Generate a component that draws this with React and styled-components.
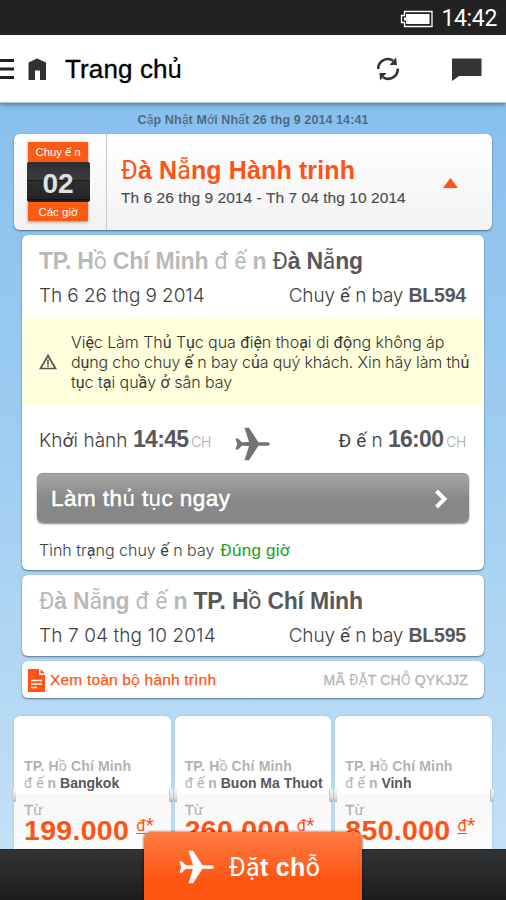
import React from "react";
import styled, { createGlobalStyle } from "styled-components";

const GlobalStyle = createGlobalStyle`
  * { box-sizing: border-box; }
  body { margin: 0; overflow: hidden; font-family: "Liberation Sans", Arial, sans-serif; }
`;

const LIGHT = `font-family: Inter, "Liberation Sans", sans-serif; font-weight: 300;`;

const Screen = styled.div`
  width: 506px;
  height: 900px;
  overflow: hidden;
  display: flex;
  flex-direction: column;
  background: #8abfed;
`;

const StatusBar = styled.div`
  flex: none;
  height: 35px;
  background: #222;
  color: #fff;
  display: flex;
  align-items: center;
  justify-content: flex-end;
  gap: 8px;
  padding: 2px 9px 0 0;
  font: 400 23px/34px Roboto, sans-serif;
  letter-spacing: -0.35px;
`;

const Header = styled.header`
  flex: none;
  height: 68px;
  background: #fff;
  display: flex;
  align-items: center;
  position: relative;
  border-bottom: 1px solid #b5c4d2;
  box-shadow: 0 1px 5px rgba(20, 50, 80, 0.6);
  svg { display: block; flex: none; }
`;

const HeaderTitle = styled.h1`
  margin: 0 0 0 19px;
  width: 311px;
  font-size: 26px;
  font-weight: 400;
  line-height: 34px;
  letter-spacing: 0.12px;
  color: #000;
  -webkit-text-stroke: 0.35px #000;
`;

const ChatSlot = styled.div`margin-left: 52px;`;

const Content = styled.main`
  flex: none;
  height: 746px;
  overflow: hidden;
  display: flex;
  flex-direction: column;
  align-items: center;
  background: linear-gradient(#89bfed, #9dccf1 45%, #c3e0f6);
`;

const Updated = styled.div`
  height: 30px;
  padding-top: 2px;
  font-size: 12.5px;
  line-height: 30px;
  font-weight: 700;
  letter-spacing: 0.09px;
  color: #4c6b87;
`;

const Fallback = styled.span`
  font-family: Roboto, sans-serif;
  font-weight: 400;
  line-height: 1;
  -webkit-text-stroke: 0;
`;

const EXTENDED = /([\u1EA0-\u1EF9đĐơƠưƯăĂ]+)/;

/* Extended Vietnamese letters are set in the system face. */
function Viet({ children }) {
  return children
    .split(EXTENDED)
    .map((part, i) => (i % 2 ? <Fallback key={i}>{part}</Fallback> : part));
}

const Panel = styled.section`
  flex: none;
  background: #fff;
  border-radius: 6px;
  box-shadow: 0 1px 2px rgba(40, 60, 80, 0.65);
`;

const Summary = styled(Panel)`
  width: 478px;
  height: 96px;
  margin-top: 1px;
  display: flex;
  background: linear-gradient(#fff, #f2f2f2);
`;

const CounterCell = styled.div`
  width: 93px;
  border-right: 1px solid #ccc;
  display: flex;
  flex-direction: column;
  align-items: center;
  padding: 8px 4px 0 0;
`;

const CounterLabel = styled.div`
  width: 60px;
  height: ${(p) => p.$h}px;
  background: #fc5b14;
  color: #fff;
  text-align: center;
  font-size: 11.5px;
  line-height: ${(p) => p.$h + 1}px;
  letter-spacing: ${(p) => p.$ls || 0}px;
  white-space: nowrap;
  box-shadow: 0 1px 3px rgba(0, 0, 0, 0.4);
`;

const CounterValue = styled.div`
  position: relative;
  width: 63px;
  height: 40px;
  border-radius: 2px;
  background: linear-gradient(#2d2f32, #3a3c40 44%, #17181a 46%, #2c2e31 48%, #25272a 86%, #0d0d0e 87%, #333 90%, #111 93%, #2c2c2c);
  color: #e0e0e0;
  text-align: center;
  font-size: 28px;
  font-weight: 700;
  line-height: 43px;
`;

const TripHeading = styled.div`
  flex: 1;
  padding: 21px 0 0 14px;
  white-space: nowrap;
`;

const TripTitle = styled.div`
  font-size: 25px;
  line-height: 31px;
  font-weight: 700;
  letter-spacing: 0.13px;
  color: #ff5313;
`;

const TripDates = styled.div`
  font-size: 15.5px;
  line-height: 24px;
  letter-spacing: 0.06px;
  color: #4d4d4f;
  -webkit-text-stroke: 0.15px #4d4d4f;
`;

const Triangle = styled.svg`
  display: block;
  margin: 44px 34px 0 0;
`;

const Leg = styled(Panel)`
  width: 462px;
  height: ${(p) => p.$h}px;
  margin-top: 5px;
  padding-top: 11px;
  white-space: nowrap;
  color: #404042;
`;

const Route = styled.div`
  padding-left: 17px;
  font-size: 23px;
  line-height: 30px;
  height: 30px;
  font-weight: 700;
  letter-spacing: -0.21px;
  color: #58585a;
`;

const Muted = styled.span`color: #b9b9b9;`;

const Split = styled.div`
  display: flex;
  align-items: center;
  padding: 0 18px 0 17px;
`;

const DateRow = styled(Split)`
  justify-content: space-between;
  height: 38px;
`;

const Piece = styled.span`
  ${LIGHT}
  font-size: 19px;
  letter-spacing: ${(p) => p.$ls || 0}px;
  b {
    font: 700 19.5px "Liberation Sans", sans-serif;
    letter-spacing: -0.2px;
    color: #58585a;
  }
`;

const Notice = styled.div`
  height: 88px;
  margin-top: 3px;
  padding: 2px 0 0 17px;
  background: #ffffdb;
  display: flex;
  align-items: center;
  gap: 14px;
  svg { flex: none; }
`;

const NoticeText = styled.div`
  ${LIGHT}
  font-size: 16px;
  line-height: 20.3px;
  color: #333;
`;

const NoticeLine = styled.div`
  height: 20.3px;
  letter-spacing: ${(p) => p.$ls}px;
`;

const TimeRow = styled(Split)`
  height: 68px;
  b { font-size: 23px; letter-spacing: -0.7px; }
  small { font-size: 14px; letter-spacing: -0.4px; color: #aaa; margin-left: 3px; }
`;

const PlaneSlot = styled.div`
  margin: 9px auto 0 24px;
  height: 34px;
`;

const CheckIn = styled.button`
  display: flex;
  align-items: center;
  justify-content: space-between;
  width: 432px;
  height: 50px;
  margin: 0 0 0 15px;
  padding: 2px 21px 0 14px;
  border: 0;
  border-radius: 6px;
  background: linear-gradient(#a6a6a6, #878787 55%, #888);
  box-shadow: 0 1px 2px rgba(0, 0, 0, 0.45), inset 0 1px 0 #939393;
  color: #fff;
  font: 400 22.5px/48px "Liberation Sans", sans-serif;
  letter-spacing: 0.43px;
  -webkit-text-stroke: 0.5px #fff;
`;

const FlightStatus = styled.div`
  ${LIGHT}
  display: flex;
  gap: 6px;
  padding: 2px 0 0 17px;
  font-size: 16px;
  line-height: 51px;
`;

const Good = styled.span`
  font-family: "Liberation Sans", sans-serif;
  font-weight: 400;
  font-size: 17px;
  color: #18a01c;
  letter-spacing: 0.25px;
`;

const BookingBar = styled(Panel)`
  width: 462px;
  height: 37px;
  margin-top: 5px;
  display: flex;
  align-items: center;
  padding: 1px 16px 0 6px;
  white-space: nowrap;
`;

const FullTrip = styled.span`
  margin: 0 auto 0 5px;
  font-size: 15.5px;
  color: #ff5313;
  letter-spacing: 0.18px;
  -webkit-text-stroke: 0.25px #ff5313;
`;

const Code = styled.span`
  font-size: 14px;
  color: #b5b5b5;
  letter-spacing: 0.18px;
  -webkit-text-stroke: 0.3px #b5b5b5;
`;

const Deals = styled.div`
  flex: none;
  display: flex;
  gap: 4px;
  width: 478px;
  margin-top: 18px;
`;

const DealCard = styled.div`
  position: relative;
  flex: 1 1 0;
  min-width: 0;
  height: 150px;
  border-radius: 6px;
  background: linear-gradient(#fff 77px, #f8f8f8 79px, #fcfcfc);
  box-shadow: 0 0 2px rgba(50, 80, 110, 0.25);
  padding: 42px 0 0 10px;
  white-space: nowrap;
  color: #b2b2b2;
  font-size: 14px;
  font-weight: 700;
  line-height: 17px;
  b { color: #58585a; }
`;

const Origin = styled.div`letter-spacing: 0.15px;`;

const Hinge = styled.i`
  position: absolute;
  top: 73px;
  ${(p) => p.$side}: -2px;
  width: 4px;
  height: 13px;
  border-left: 1px solid #c4c8cb;
  background: linear-gradient(#f4f4f4, #dedede 60%, #b8b8b8);
`;

const From = styled.div`
  margin-top: 9px;
  font-weight: 400;
  font-size: 15px;
  line-height: 17px;
  -webkit-text-stroke: 0.3px #b2b2b2;
`;

const Price = styled.div`
  display: flex;
  align-items: flex-start;
  gap: 7px;
  font-size: 28.5px;
  line-height: 24px;
  color: #ff5313;
  letter-spacing: 0.3px;
`;

const Currency = styled.span`
  font-weight: 400;
  font-size: 16px;
  line-height: 14px;
  letter-spacing: 0;
  u { text-underline-offset: 2px; }
`;

const Star = styled.span`font-size: 19px; line-height: 14px; font-family: Roboto, sans-serif;`;

const Footer = styled.footer`
  flex: none;
  height: 51px;
  display: flex;
  justify-content: center;
  align-items: flex-end;
  border-top: 1px solid #292929;
  background: linear-gradient(#323335, #1d1d1e);
`;

const BookButton = styled.button`
  position: relative;
  flex: none;
  width: 218px;
  height: 68px;
  border: 0;
  border-radius: 6px 6px 0 0;
  background: linear-gradient(#fe7c45, #ff5612 70%);
  box-shadow: 0 0 3px rgba(0, 0, 0, 0.7);
  color: #fff;
  display: flex;
  align-items: center;
  gap: 14px;
  padding: 2px 0 0 35px;
  font: 700 25px/66px "Liberation Sans", sans-serif;
  letter-spacing: 0.3px;
`;

function Plane({ color }) {
  return (
    <svg width="36" height="34" viewBox="0 0 36 34" fill={color}>
      <path d="M0.5 11.5 H3 L7 15.2 L14 15 L9.5 .8 H14 L23.5 15.2 H33.5 Q36 17 33.5 18.8 H23.5 L14 33.2 H9.5 L14 19 L7 18.8 L3 22.5 H.5 L2.2 17 Z" />
    </svg>
  );
}

function Deal({ to, price }) {
  return (
    <DealCard>
      <Hinge $side="left" />
      <Hinge $side="right" />
      <Origin><Viet>TP. Hồ Chí Minh</Viet></Origin>
      <div><Viet>đ ế n </Viet><b>{to}</b></div>
      <From><Viet>Từ</Viet></From>
      <Price>
        {price}
        <Currency><u><Viet>đ</Viet></u><Star>*</Star></Currency>
      </Price>
    </DealCard>
  );
}

export default function App() {
  return (
    <Screen>
      <GlobalStyle />
      <StatusBar>
        <svg width="33" height="18" viewBox="0 0 33 18">
          <path d="M4.5 1.5H32V16.5H4.5V12.5H1.5V5.5H4.5Z" fill="none" stroke="#fff" strokeWidth="1.3" />
          <path d="M6 4H29.5V14H6V10.5H4V7.5H6Z" fill="#fff" />
        </svg>
        14:42
      </StatusBar>
      <Header>
        <svg width="14" height="22" viewBox="0 0 14 22">
          <path d="M0 2.5H14M0 11H14M0 19.5H14" stroke="#222" strokeWidth="3" />
        </svg>
        <svg width="32" height="22" viewBox="0 0 32 22">
          <path d="M14.5 4.5L23 .5L32 4.5V22H26V12.5H21V22H14.5Z" fill="#303133" />
        </svg>
        <HeaderTitle><Viet>Trang chủ</Viet></HeaderTitle>
        <svg width="24" height="24" viewBox="0 0 24 24">
          <path d="M2.2 12A9.6 9.6 0 0 1 17 3.6M21.8 11.5A9.6 9.6 0 0 1 7 20.2" fill="none" stroke="#303133" strokeWidth="2.5" />
          <path d="M20 .5L21 8H13.5ZM4 23.5L3.5 16H10.5Z" fill="#303133" />
        </svg>
        <ChatSlot>
          <svg width="30" height="24" viewBox="0 0 30 24">
            <path d="M0 1.5H29.5V19H7L0 24Z" fill="#343434" />
          </svg>
        </ChatSlot>
      </Header>
      <Content>
        <Updated><Viet>Cập Nhật Mới Nhất 26 thg 9 2014 14:41</Viet></Updated>
        <Summary>
          <CounterCell>
            <CounterLabel $h={20} $ls={-0.1}><Viet>Chuy ế n</Viet></CounterLabel>
            <CounterValue>02</CounterValue>
            <CounterLabel $h={19}><Viet>Các giờ</Viet></CounterLabel>
          </CounterCell>
          <TripHeading>
            <TripTitle><Viet>Đà Nẵng Hành trinh</Viet></TripTitle>
            <TripDates>Th 6 26 thg 9 2014 - Th 7 04 thg 10 2014</TripDates>
          </TripHeading>
          <Triangle width="15" height="10"><path d="M7.5 0L15 10H0Z" fill="#ff5313" /></Triangle>
        </Summary>
        <Leg $h={335}>
          <Route><Muted><Viet>TP. Hồ Chí Minh đ ế n </Viet></Muted><Viet>Đà Nẵng</Viet></Route>
          <DateRow>
            <Piece $ls={-0.08}>Th 6 26 thg 9 2014</Piece>
            <Piece $ls={-0.15}><Viet>Chuy ế n bay </Viet><b>BL594</b></Piece>
          </DateRow>
          <Notice>
            <svg width="18" height="16" viewBox="0 0 18 16" fill="none" stroke="#555" strokeWidth="1.7">
              <path d="M9 1.5L16.5 14.5H1.5ZM9 5.5V10.5M9 11.5V13" />
            </svg>
            <NoticeText>
              <NoticeLine $ls={-0.06}><Viet>Việc Làm Thủ Tục qua điện thoại di động không áp</Viet></NoticeLine>
              <NoticeLine $ls={-0.14}><Viet>dụng cho chuy ế n bay của quý khách. Xin hãy làm thủ</Viet></NoticeLine>
              <NoticeLine $ls={-0.03}><Viet>tục tại quầy ở sân bay</Viet></NoticeLine>
            </NoticeText>
          </Notice>
          <TimeRow>
            <Piece $ls={0.05}><Viet>Khởi hành </Viet><b>14:45</b><small>CH</small></Piece>
            <PlaneSlot><Plane color="#737373" /></PlaneSlot>
            <Piece $ls={-0.1}><Viet>Đ ế n </Viet><b>16:00</b><small>CH</small></Piece>
          </TimeRow>
          <CheckIn>
            <span><Viet>Làm thủ tục ngay</Viet></span>
            <svg width="14" height="20" viewBox="0 0 14 20"><path d="M2.5 2L10.5 10L2.5 18" fill="none" stroke="#fff" strokeWidth="4" /></svg>
          </CheckIn>
          <FlightStatus>
            <span><Viet>Tình trạng chuy ế n bay</Viet></span>
            <Good><Viet>Đúng giờ</Viet></Good>
          </FlightStatus>
        </Leg>
        <Leg $h={81}>
          <Route><Muted><Viet>Đà Nẵng đ ế n </Viet></Muted><Viet>TP. Hồ Chí Minh</Viet></Route>
          <DateRow>
            <Piece $ls={0.11}>Th 7 04 thg 10 2014</Piece>
            <Piece $ls={-0.15}><Viet>Chuy ế n bay </Viet><b>BL595</b></Piece>
          </DateRow>
        </Leg>
        <BookingBar>
          <svg width="17" height="23" viewBox="0 0 17 23">
            <path d="M0 0H11V6H17V23H0ZM12.5 0L17 4.5H12.5Z" fill="#ff5313" />
            <path d="M3 11.5H14M3 15H14M3 18.5H9" stroke="#fff" strokeWidth="1.5" />
          </svg>
          <FullTrip><Viet>Xem toàn bộ hành trình</Viet></FullTrip>
          <Code><Viet>MÃ ĐẶT CHỖ QYKJJZ</Viet></Code>
        </BookingBar>
        <Deals>
          <Deal to="Bangkok" price="199.000" />
          <Deal to="Buon Ma Thuot" price="260.000" />
          <Deal to="Vinh" price="850.000" />
        </Deals>
      </Content>
      <Footer>
        <BookButton>
          <Plane color="#fff" />
          <span><Viet>Đặt chỗ</Viet></span>
        </BookButton>
      </Footer>
    </Screen>
  );
}
